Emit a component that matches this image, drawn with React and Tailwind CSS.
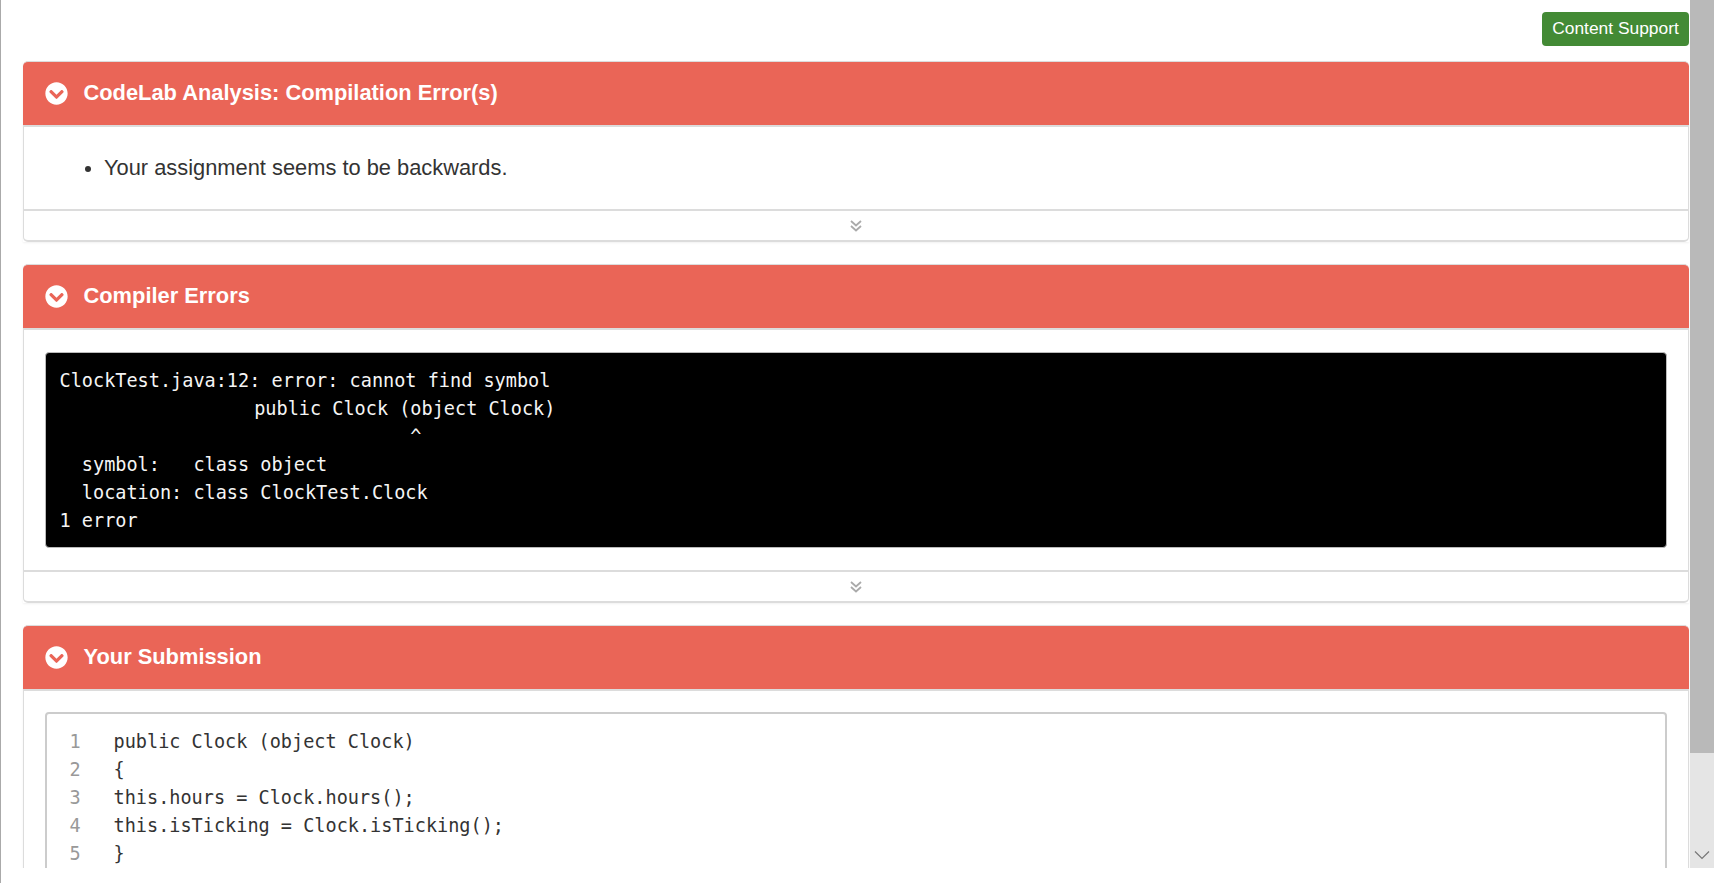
import { FaChevronCircleDown } from "react-icons/fa";

const errorLines = [
  "ClockTest.java:12: error: cannot find symbol",
  <>
    {"                 "}
    <span className="ml-[5px]">public Clock (object Clock)</span>
  </>,
  <>
    {"                               "}
    <span className="ml-[5px]">^</span>
  </>,
  "  symbol:   class object",
  "  location: class ClockTest.Clock",
  "1 error",
];

const codeLines = [
  "public Clock (object Clock)",
  "{",
  "this.hours = Clock.hours();",
  "this.isTicking = Clock.isTicking();",
  "}",
];

const mono = "font-['DejaVu_Sans_Mono',monospace] text-[18.55px] leading-[28px]";

const Panel = ({ title, footer = true, children }) => (
  <section className="shadow-[0_1px_2px_rgba(0,0,0,0.06)]">
    <header className="flex h-[66px] items-center rounded-t-[5px] border-t border-b-2 border-t-[#dcdcdc] border-b-[#dcdcdc] bg-[#ea6557] pl-[22px] pb-[1px] text-white">
      <FaChevronCircleDown className="h-[23px] w-[23px] shrink-0" />
      <h2 className="ml-[15.5px] text-[21.85px] font-bold">{title}</h2>
    </header>
    <div className={`border-x-[1.5px] border-[#dcdcdc] ${footer ? "rounded-b-[5px] border-b-2" : ""}`}>
      {children}
      {footer && (
        <div className="flex h-[31px] items-center justify-center border-t-2 border-[#dcdcdc]">
          <svg width="12" height="12" viewBox="0 0 12 12" fill="none" stroke="#aaa" strokeWidth="1.8">
            <path d="M1 1 L6 5.5 L11 1" />
            <path d="M1 6 L6 10.5 L11 6" />
          </svg>
        </div>
      )}
    </div>
  </section>
);

export default function App() {
  return (
    <div className="h-screen overflow-hidden border-l border-[#aaa] bg-white font-['Liberation_Sans',sans-serif] text-[#333]">
      <div className="flex h-[868px]">
        <main className="flex flex-1 flex-col gap-[22px] overflow-hidden pl-[22px] pr-[1px]">
          <div className="-mb-[7px] flex justify-end pt-[12px]">
            <button className="flex h-[34px] w-[147px] items-center justify-center rounded-[4px] bg-[#438a35] pb-[2px] text-[17.4px] text-white">
              Content Support
            </button>
          </div>

          <Panel title="CodeLab Analysis: Compilation Error(s)">
            <ul className="h-[82px] list-disc pl-[80px] pt-[26px] text-[21.85px] leading-[30px] marker:text-[20px] marker:text-[#333]">
              <li>Your assignment seems to be backwards.</li>
            </ul>
          </Panel>

          <Panel title="Compiler Errors">
            <div className="pl-[20.5px] pr-[21.5px] pb-[22px] pt-[22px]">
              <pre className={`${mono} h-[196px] rounded-[4px] border border-[#bbb] bg-black px-[14px] pt-[14px] text-[#f5f5f5]`}>
                {errorLines.map((line, i) => (
                  <div key={i}>{line}</div>
                ))}
              </pre>
            </div>
          </Panel>

          <Panel title="Your Submission" footer={false}>
            <div className="pl-[20.5px] pr-[21.5px] pt-[21px]">
              <div className={`${mono} flex rounded-[4px] border-2 border-[#ccc] px-[23px] pt-[14px] pb-[20px] text-[#333]`}>
                <div className="w-[44px] shrink-0 text-[#999]">
                  {codeLines.map((_, i) => (
                    <div key={i}>{i + 1}</div>
                  ))}
                </div>
                <pre className={mono}>
                  {codeLines.map((line, i) => (
                    <div key={i}>{line}</div>
                  ))}
                </pre>
              </div>
            </div>
          </Panel>
        </main>

        {/* scrollbar */}
        <div className="flex w-[24px] shrink-0 flex-col bg-[#e5e5e5]">
          <div className="h-[753px] bg-[#b9b9b9]" />
          <div className="mt-auto flex h-[26px] items-center justify-center">
            <svg width="16" height="10" viewBox="0 0 16 10" fill="none" stroke="#777" strokeWidth="1.2">
              <path d="M1 1.5 L8 8.5 L15 1.5" />
            </svg>
          </div>
        </div>
      </div>
    </div>
  );
}
